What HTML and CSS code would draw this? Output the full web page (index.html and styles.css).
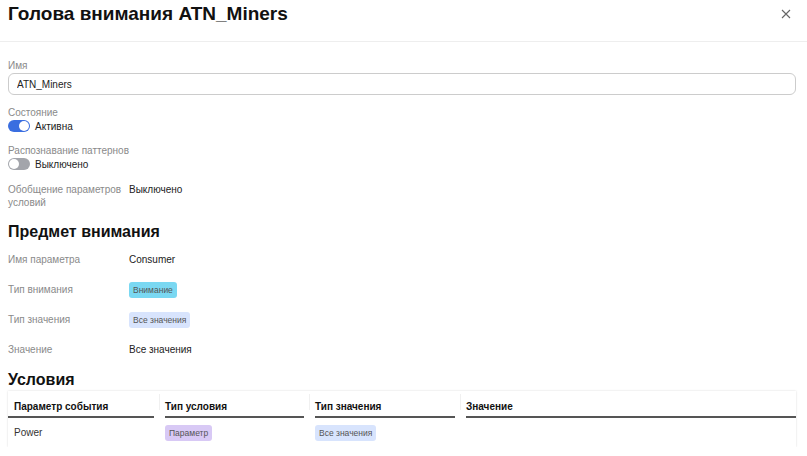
FILE: index.html
```html
<!DOCTYPE html>
<html>
<head>
  <title>Голова внимания ATN_Miners</title>
  <link rel="stylesheet" href="styles.css">
</head>
<body>
  <div class="modal">
    <div class="modal-head">
      <h1>Голова внимания ATN_Miners</h1>
      <button class="close" aria-label="Закрыть">
        <svg width="10" height="10" viewBox="0 0 10 10"><path d="M1 1L9 9M9 1L1 9" stroke="#666" stroke-width="1.1" fill="none"/></svg>
      </button>
    </div>

    <div class="modal-body">
      <div class="field">
        <label>Имя</label>
        <input type="text" value="ATN_Miners">
      </div>

      <div class="field">
        <label>Состояние</label>
        <div class="switch-row"><span class="switch on"></span>Активна</div>
      </div>

      <div class="field">
        <label>Распознавание паттернов</label>
        <div class="switch-row"><span class="switch"></span>Выключено</div>
      </div>

      <div class="props">
        <div class="prop-label">Обобщение параметров условий</div>
        <div class="prop-value">Выключено</div>
      </div>

      <h2>Предмет внимания</h2>
      <div class="props list">
        <div class="prop-label">Имя параметра</div>
        <div class="prop-value">Consumer</div>
        <div class="prop-label">Тип внимания</div>
        <div class="prop-value"><span class="tag cyan">Внимание</span></div>
        <div class="prop-label">Тип значения</div>
        <div class="prop-value"><span class="tag blue">Все значения</span></div>
        <div class="prop-label">Значение</div>
        <div class="prop-value">Все значения</div>
      </div>

      <h2 class="cond">Условия</h2>
      <div class="table">
        <div class="row head">
          <div class="cell">Параметр события</div>
          <div class="cell">Тип условия</div>
          <div class="cell">Тип значения</div>
          <div class="cell">Значение</div>
        </div>
        <div class="row">
          <div class="cell">Power</div>
          <div class="cell"><span class="tag purple">Параметр</span></div>
          <div class="cell"><span class="tag blue">Все значения</span></div>
          <div class="cell"></div>
        </div>
      </div>
    </div>
  </div>
</body>
</html>
```

FILE: styles.css
```css
body { margin: 0; background: white; font-family: "Liberation Sans", Arial, sans-serif; font-size: 10px; color: #222; }
.modal { width: 807px; }
.modal-head { display: flex; align-items: flex-start; justify-content: space-between; height: 42px; padding: 2px 16px 0 8px; border-bottom: 1px solid #eee; box-sizing: border-box; }
.modal-head h1 { margin: 0; font-size: 19px; line-height: 24px; font-weight: bold; color: #111; }
.close { border: 0; background: none; padding: 0; margin-top: 7px; display: flex; }
.modal-body { padding: 18px 11px 0 8px; }
.field { display: flex; flex-direction: column; margin-bottom: 13px; }
.field:first-child { margin-bottom: 12px; }
.field label { color: #8a8a8a; line-height: 12px; }
.field input { margin-top: 1px; height: 22px; box-sizing: border-box; border: 1px solid #ccc; border-radius: 6px; padding: 0 8px; font: 10px "Liberation Sans", Arial, sans-serif; color: #222; }
.switch-row { display: flex; align-items: center; gap: 5px; height: 12px; margin-top: 1px; }
.switch { position: relative; width: 22px; height: 12px; border-radius: 6px; background: #a3a5ab; }
.switch::after { content: ""; position: absolute; top: 1px; left: 1px; width: 10px; height: 10px; border-radius: 50%; background: white; }
.switch.on { background: #3a6ee0; }
.switch.on::after { left: 11px; }
.props { display: grid; grid-template-columns: 121px 1fr; line-height: 13px; }
.prop-label { color: #8a8a8a; padding-right: 6px; }
.prop-value { color: #222; }
.props.list { grid-auto-rows: 30px; align-items: center; line-height: 14px; }
h2 { margin: 13px 0 3px; font-size: 16px; line-height: 20px; font-weight: bold; color: #111; }
h2.cond { margin: 5px 0 1px; }
.tag { display: inline-block; padding: 2px 4px; border-radius: 3px; font-size: 8.5px; line-height: 12px; color: #555; }
.tag.cyan { background: #7ad8f2; }
.tag.blue { background: #d8e4fd; }
.tag.purple { background: #d8c9f5; }
.table { box-shadow: 0 0 2px rgba(0,0,0,0.15); }
.row { display: grid; grid-template-columns: 146px 139px 140px 1fr; column-gap: 11px; }
.row .cell:first-child { padding-left: 6px; }
.row.head .cell { position: relative; font-weight: bold; color: #111; line-height: 12px; padding-top: 10px; padding-bottom: 3px; border-bottom: 2px solid #555; }
.row.head .cell + .cell::before { content: ""; position: absolute; left: -6px; top: 3px; bottom: 6px; border-left: 1px solid #f0f0f0; }
.row:not(.head) .cell { height: 29px; display: flex; align-items: center; color: #333; }
```
